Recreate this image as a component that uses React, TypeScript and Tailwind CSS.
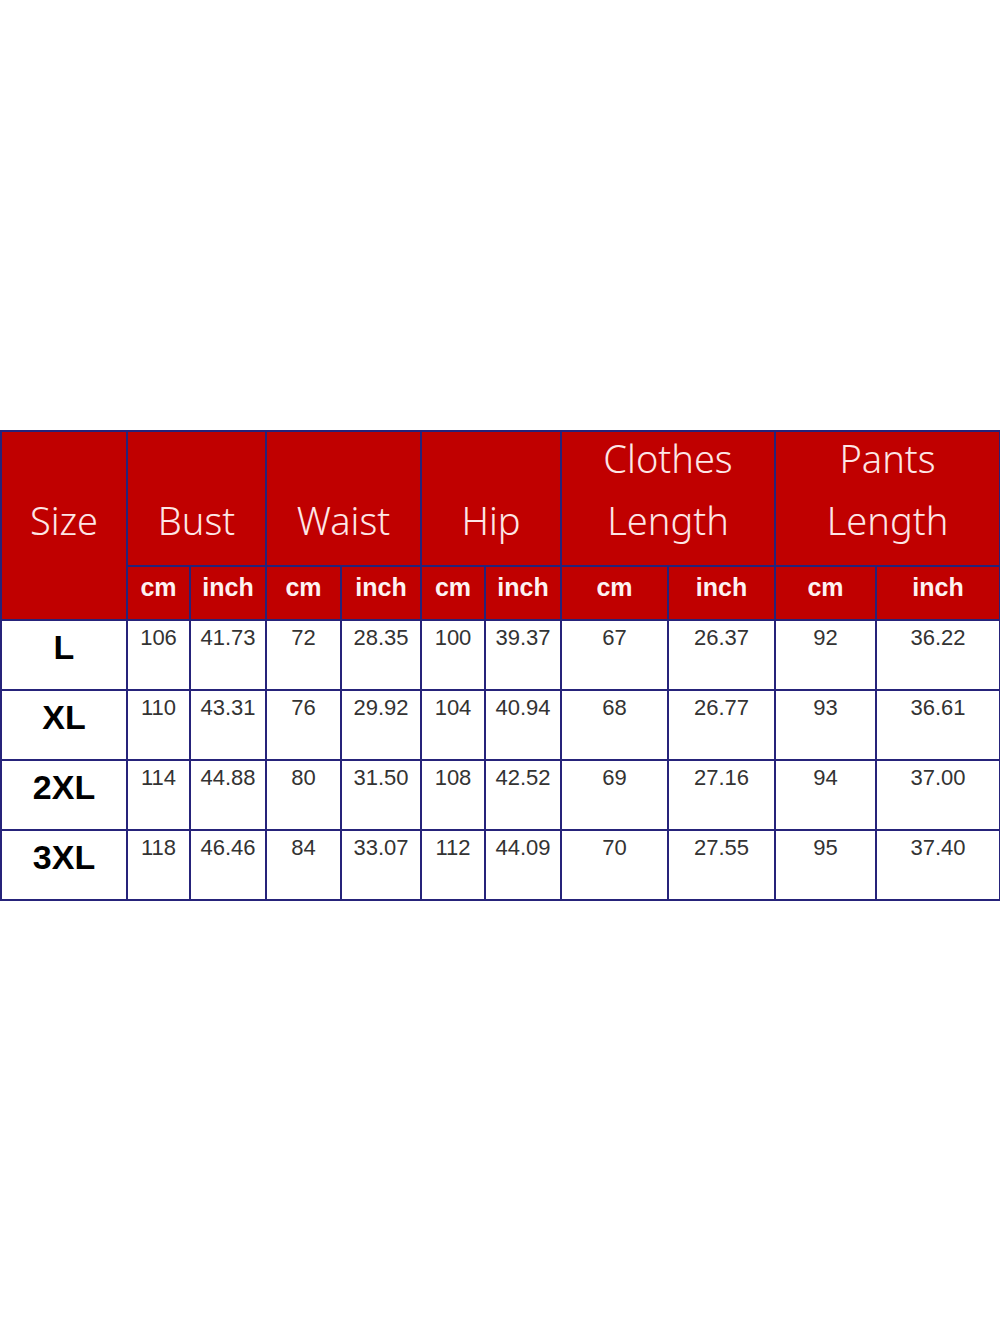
import React from "react";

const widths = [126, 63, 76, 75, 80, 64, 76, 107, 107, 101, 124];

const rows = [
  { size: "L", values: ["106", "41.73", "72", "28.35", "100", "39.37", "67", "26.37", "92", "36.22"] },
  { size: "XL", values: ["110", "43.31", "76", "29.92", "104", "40.94", "68", "26.77", "93", "36.61"] },
  { size: "2XL", values: ["114", "44.88", "80", "31.50", "108", "42.52", "69", "27.16", "94", "37.00"] },
  { size: "3XL", values: ["118", "46.46", "84", "33.07", "112", "44.09", "70", "27.55", "95", "37.40"] },
];

const groups = [["Bust"], ["Waist"], ["Hip"], ["Clothes", "Length"], ["Pants", "Length"]];

const cell = "border-2 border-[#26237a] p-0";

export default function App() {
  return (
    <div className="w-[1000px] h-[1333px] bg-white pt-[430px]">
      <table
        className="w-[1000px] table-fixed border-collapse"
        style={{ fontFamily: '"Liberation Sans", Arial, sans-serif' }}
      >
        <colgroup>
          {widths.map((w, i) => (
            <col key={i} style={{ width: w }} />
          ))}
        </colgroup>
        <thead>
          <tr className="h-[135px] bg-[#c00000] text-[#fde6e6]">
            <th
              rowSpan={2}
              className={`${cell} align-top pt-[57px] text-[38px] font-light leading-[62px]`}
              style={{ fontFamily: '"Noto Sans", sans-serif' }}
            >
              Size
            </th>
            {groups.map((g, i) => (
              <th
                key={i}
                colSpan={2}
                className={`${cell} align-top text-[38px] font-light leading-[62px] ${g.length === 1 ? "pt-[57px]" : "pt-0"}`}
                style={{ fontFamily: '"Noto Sans", sans-serif' }}
              >
                <div className={g.length === 1 ? "" : "-mt-[5px]"}>
                  {g.map((line) => (
                    <div key={line}>{line}</div>
                  ))}
                </div>
              </th>
            ))}
          </tr>
          <tr className="h-[54px] bg-[#c00000] text-[#fdf2f2]">
            {groups.flatMap((_, i) => [
              <th key={`c${i}`} className={`${cell} text-[25px] font-bold leading-none pb-[12px]`}>
                cm
              </th>,
              <th key={`i${i}`} className={`${cell} text-[25px] font-bold leading-none pb-[12px]`}>
                inch
              </th>,
            ])}
          </tr>
        </thead>
        <tbody>
          {rows.map((r) => (
            <tr key={r.size} className="h-[70px]">
              <td className={`${cell} text-center align-middle pb-[16px] text-[34px] font-bold text-black`}>
                {r.size}
              </td>
              {r.values.map((v, i) => (
                <td
                  key={i}
                  className={`${cell} text-center align-top pt-[4px] text-[22px] leading-[26px] text-[#333333]`}
                >
                  {v}
                </td>
              ))}
            </tr>
          ))}
        </tbody>
      </table>
    </div>
  );
}
